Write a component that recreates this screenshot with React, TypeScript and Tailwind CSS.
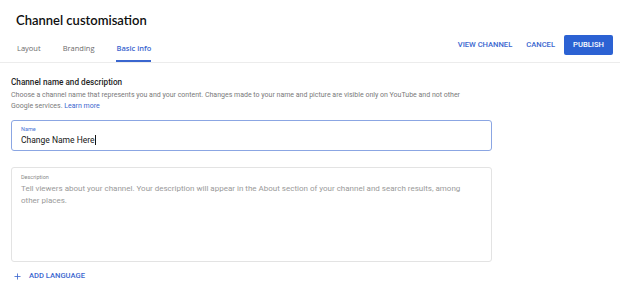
import { Plus } from "lucide-react";

const tabs = ["Layout", "Branding", "Basic info"];

export default function App() {
  return (
    <div className="h-[293px] w-[620px] overflow-hidden bg-white font-['Roboto',sans-serif]">
      <div className="h-[30px] pl-[16px] pt-[10px]">
        <h1 className="font-['Lato',sans-serif] text-[13px] font-semibold leading-[20px] text-[#0f0f0f]">
          Channel customisation
        </h1>
      </div>

      <div className="flex h-[33px] justify-between border-b border-[#ececec]">
        <div className="flex gap-[22px] pl-[17px]">
          {tabs.map((t) => {
            const active = t === "Basic info";
            return (
              <div
                key={t}
                className={
                  active
                    ? "flex h-full items-center border-b-2 border-[#3a66cf] pt-[8px] font-['Open_Sans',sans-serif] text-[7.5px] font-semibold text-[#3a66cf]"
                    : "flex h-full items-center border-b-2 border-transparent pt-[8px] font-['Open_Sans',sans-serif] text-[7.5px] text-[#6b6b6b]"
                }
              >
                {t}
              </div>
            );
          })}
        </div>

        <div className="flex items-start gap-[9px] pr-[7px] pt-[5px]">
          <button className="h-[20px] pr-[5px] text-[7.6px] font-medium uppercase text-[#3a66cf]">
            View channel
          </button>
          <button className="h-[20px] text-[7.6px] font-medium uppercase text-[#3a66cf]">
            Cancel
          </button>
          <button className="h-[20px] w-[49px] rounded-[2px] bg-[#2c62d3] text-[7.6px] font-medium uppercase text-white">
            Publish
          </button>
        </div>
      </div>

      <div className="pl-[11px] pr-[128px] pt-[13px]">
        <h2 className="text-[8.2px] font-medium leading-[12px] text-[#1f1f1f]">
          Channel name and description
        </h2>
        <p className="mt-[2px] text-[7px] leading-[11px] text-[#7a7a7a]">
          Choose a channel name that represents you and your content. Changes made to your name and picture are visible only on YouTube and not other
          <br />
          Google services. <span className="text-[#3a66cf]">Learn more</span>
        </p>

        <div className="mt-[8px] h-[31px] rounded-[3px] border border-[#8ba6e3] pl-[9px] pt-[5px]">
          <div className="text-[5.5px] leading-[7px] text-[#4a74d6]">Name</div>
          <div className="mt-[1px] flex items-center text-[8.5px] leading-[12px] text-[#151515]">
            Change Name Here
            <span className="ml-[0.5px] inline-block h-[10px] w-[1px] bg-[#151515]" />
          </div>
        </div>

        <div className="mt-[16px] h-[95px] rounded-[3px] border border-[#e3e3e3] pl-[9px] pr-[12px] pt-[6px]">
          <div className="text-[5.5px] leading-[7px] text-[#8a8a8a]">Description</div>
          <p className="mt-[2px] text-[8px] leading-[12px] text-[#9a9a9a]">
            Tell viewers about your channel. Your description will appear in the About section of your channel and search results, among other places.
          </p>
        </div>

        <button className="mt-[9px] flex items-center gap-[7px] pl-[2px] text-[7.6px] font-medium uppercase leading-[10px] text-[#3a66cf]">
          <Plus className="h-[9px] w-[9px]" strokeWidth={2.2} />
          Add language
        </button>
      </div>
    </div>
  );
}
